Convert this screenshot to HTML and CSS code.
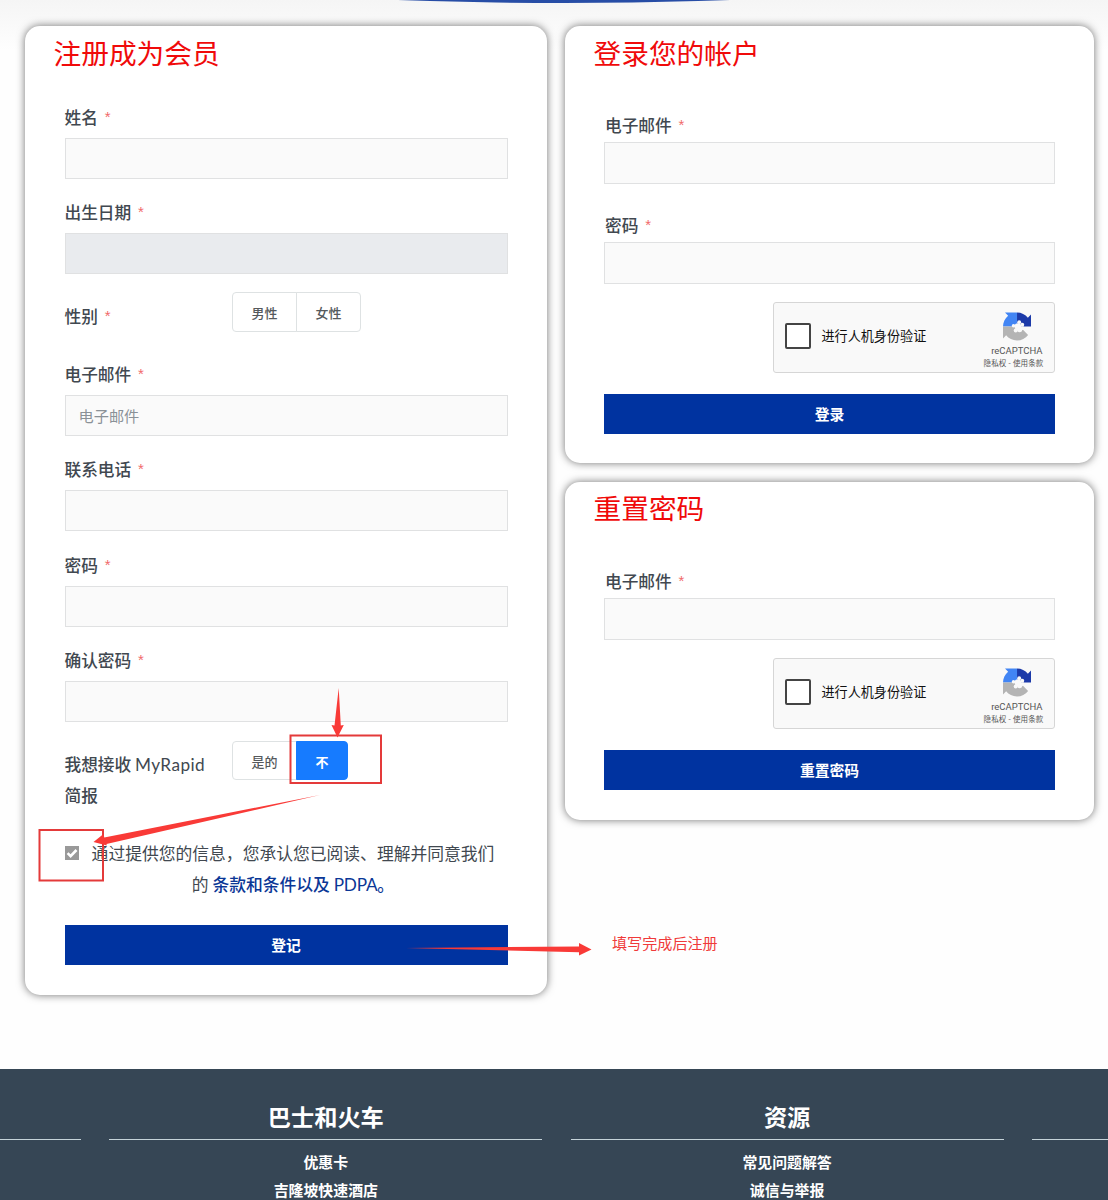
FILE: index.html
```html
<!DOCTYPE html>
<html lang="zh-CN">
<head>
<meta charset="utf-8">
<title>MyRapid</title>
<link rel="stylesheet" href="styles.css">
</head>
<body>
<svg width="0" height="0" class="defs">
  <symbol id="recaptcha" viewBox="0 0 64 64">
    <path fill="#1c3aa9" d="M64 31.955V4.687l-7.160 7.160C50.948 4.674 42.033.093 32.050.093V32z"/>
    <path fill="#4285f4" d="M32 .094H4.594l7.160 7.160C4.580 13.147 0 22.060 0 32.046h32z"/>
    <path fill="#b4b4b4" d="M.001 32.045v27.268l7.160-7.160c5.860 7.173 14.774 11.754 24.760 11.754 10.400 0 19.622-4.960 25.458-12.640L45.600 39.500 32 32z"/>
    <g fill="#f9f9f9"><circle cx="24" cy="30" r="4"/><circle cx="37" cy="22" r="4.500"/><circle cx="44" cy="28" r="4.500"/><circle cx="34" cy="32" r="7.500"/><circle cx="29" cy="41" r="4.500"/><circle cx="38" cy="39" r="6"/><path d="M38 32h10l-3 8h-8z"/></g>
  </symbol>
</svg>
<div class="banner"><div class="banner-edge"></div></div>
<main class="columns">
  <section class="card register">
    <h2>注册成为会员</h2>
    <form class="form">
      <div class="field"><label>姓名 <i>*</i></label><div class="input"></div></div>
      <div class="field"><label>出生日期 <i>*</i></label><div class="input disabled"></div></div>
      <div class="choice"><label>性别 <i>*</i></label><div class="toggle"><span>男性</span><span>女性</span></div></div>
      <div class="field"><label>电子邮件 <i>*</i></label><div class="input">电子邮件</div></div>
      <div class="field"><label>联系电话 <i>*</i></label><div class="input"></div></div>
      <div class="field"><label>密码 <i>*</i></label><div class="input"></div></div>
      <div class="field"><label>确认密码 <i>*</i></label><div class="input"></div></div>
      <div class="choice news"><label>我想接收 <span class="latin">MyRapid</span> 简报</label><div class="toggle"><span>是的</span><span class="active">不</span></div></div>
      <div class="consent">
        <svg class="check" viewBox="0 0 14 14"><rect width="14" height="14" fill="#999"/><path d="M2.600 7.200l3 3L11.500 4" fill="none" stroke="#fff" stroke-width="2.600"/></svg>
        <p>通过提供您的信息，您承认您已阅读、理解并同意我们<br>的 <a>条款和条件以及 <span class="latin pdpa">PDPA</span>。</a></p>
      </div>
      <div class="button">登记</div>
    </form>
  </section>
  <div class="side">
    <section class="card login">
      <h2>登录您的帐户</h2>
      <form class="form">
        <div class="field"><label>电子邮件 <i>*</i></label><div class="input"></div></div>
        <div class="field"><label>密码 <i>*</i></label><div class="input"></div></div>
        <div class="captcha"><span class="box"></span><span class="prompt">进行人机身份验证</span><div class="brand"><svg><use href="#recaptcha"/></svg><b>reCAPTCHA</b><small>隐私权 - 使用条款</small></div></div>
        <div class="button">登录</div>
      </form>
    </section>
    <section class="card reset">
      <h2>重置密码</h2>
      <form class="form">
        <div class="field"><label>电子邮件 <i>*</i></label><div class="input"></div></div>
        <div class="captcha"><span class="box"></span><span class="prompt">进行人机身份验证</span><div class="brand"><svg><use href="#recaptcha"/></svg><b>reCAPTCHA</b><small>隐私权 - 使用条款</small></div></div>
        <div class="button">重置密码</div>
      </form>
    </section>
  </div>
</main>
<footer class="footer">
  <div class="footer-col first"><h3></h3></div>
  <div class="footer-col"><h3>巴士和火车</h3><a>优惠卡</a><a>吉隆坡快速酒店</a></div>
  <div class="footer-col"><h3>资源</h3><a>常见问题解答</a><a>诚信与举报</a></div>
  <div class="footer-col last"><h3></h3></div>
</footer>
<svg class="marks" width="1108" height="1200" viewBox="0 0 1108 1200">
  <g fill="none" stroke="#e43a3a" stroke-width="2">
    <rect x="290.500" y="735.500" width="90.500" height="47.500"/>
    <rect x="39.500" y="830" width="63.500" height="50.500"/>
  </g>
  <g fill="#f93a37">
    <path d="M338.700 688L340.800 725.500l3-.5-6.300 12.500-6-12.500 3 .5z"/>
    <path d="M320 795L106.500 844l.3 1.500L93.500 842l10-8 .8 3.500z"/>
    <path d="M406 948l173-1.500v-3.500l12.500 6.500-12.500 6v-3.300z"/>
  </g>
</svg>
<div class="note">填写完成后注册</div>
</body>
</html>
```
FILE: styles.css
```css
* { box-sizing: border-box; }
body {
  position: relative;
  margin: 0;
  height: 1200px;
  overflow: hidden;
  font-family: "Noto Sans CJK SC", sans-serif;
  font-size: 16.7px;
  color: #414850;
  background: linear-gradient(#f5f5f5, #fefefe 50px);
}
h2, h3, p { margin: 0; font-weight: 400; }
.defs { position: absolute; }
.banner {
  position: absolute;
  left: 0;
  top: 0;
  width: 100%;
  height: 4px;
  overflow: hidden;
}
.banner-edge {
  width: 700px;
  height: 50px;
  margin: -47.500px 0 0 214px;
  border-radius: 50%;
  background: #274da6;
}
.columns {
  display: flex;
  align-items: flex-start;
  gap: 18px;
  height: 1069px;
  padding: 26px 14px 0 24.500px;
}
.card {
  border-radius: 15px;
  background: #fff;
  box-shadow: 0 0 8px rgba(0, 0, 0, .55);
}
.card h2 {
  height: 74px;
  padding: 5.500px 29px 0;
  font-size: 27.700px;
  line-height: 40px;
  color: #f00a0a;
}
.side .card h2 { padding: 5.500px 28.500px 0; }
.side .reset h2 { padding-top: 5px; }
.register { width: 522.500px; height: 968.500px; }
.side { display: flex; flex: 1; flex-direction: column; gap: 19px; }
.login { height: 437px; }
.reset { height: 337.500px; }
.form { padding: 1.500px 39.500px 0 40px; }
.side .form { padding: 10px 39px 0; }
label { display: block; line-height: 31px; font-weight: 500; }
label i {
  position: relative;
  top: -2px;
  margin-left: 3px;
  font: 15px/1 "Liberation Sans", sans-serif;
  color: #f16a6a;
}
.field { height: 95.400px; }
.input {
  height: 41px;
  margin-top: 5px;
  padding-left: 13px;
  border: 1px solid #e0e1e2;
  background: #fafafa;
  font-size: 15.200px;
  line-height: 38px;
  color: #8a9197;
}
.input.disabled { background: #e9ebee; }
.side .field { height: 100.200px; }
.side .input { height: 41.500px; margin-top: 1px; }
.side label { padding-left: 1px; }
.side .field:has(+ .captcha) { height: 92px; }
.choice { display: flex; height: 66.700px; }
.choice label { flex: 0 0 167.500px; padding: 8.500px 20px 0 0; }
.latin { font-family: Lato, sans-serif; font-weight: 400; font-size: 17.200px; letter-spacing: .45px; }
.pdpa { letter-spacing: -.2px; }
.news { height: 97px; }
.toggle {
  display: flex;
  height: 39.500px;
  font-size: 13px;
  font-weight: 500;
  color: #55595c;
}
.toggle span { padding: 0 18.500px; border: 1px solid #dee2e3; line-height: 39px; }
.toggle span:first-child { border-radius: 4px 0 0 4px; }
.toggle span:last-child { margin-left: -1px; border-radius: 0 4px 4px 0; }
.toggle .active { border-color: #167bff; background: #167bff; color: #fff; font-weight: 700; }
.consent { display: flex; height: 87px; font-size: 16.800px; line-height: 31px; }
.check { width: 14px; height: 14px; margin-top: 8.500px; }
.consent p { flex: none; width: 403px; margin-left: 13px; text-align: center; white-space: nowrap; }
.consent a { color: #0b3796; font-weight: 500; }
.button {
  height: 40px;
  background: #0033a0;
  color: #fff;
  font-size: 14.800px;
  font-weight: 700;
  line-height: 40px;
  text-align: center;
}
.captcha {
  display: flex;
  width: 282px;
  height: 71px;
  margin: 0 .5px 20.500px auto;
  padding-left: 11px;
  border: 1px solid #d6d6d6;
  border-radius: 3px;
  background: #f9f9f9;
}
.box { width: 26px; height: 26px; margin-top: 20px; border: 2px solid #444; border-radius: 2px; background: #fff; }
.prompt { margin-left: 11px; font-size: 13.100px; line-height: 65px; color: #111; }
.brand { display: flex; flex: 1; flex-direction: column; align-items: flex-end; padding: 9px 10px 0 0; color: #555; }
.brand svg { width: 28px; height: 29px; margin-right: 12.500px; }
.brand b { margin: 3.500px 1px 0 0; font: 400 9.500px/12px Roboto, sans-serif; }
.brand small { font-size: 7.500px; line-height: 12px; letter-spacing: .15px; white-space: nowrap; }
.footer {
  display: flex;
  gap: 28.300px;
  height: 131px;
  background: #364655;
  color: #fff;
  text-align: center;
}
.footer-col { flex: 0 0 433px; font-size: 14.900px; font-weight: 700; }
.footer-col.first { flex-basis: 81px; }
.footer-col.last { flex: 1 1 0; }
.footer-col h3 {
  height: 71px;
  margin-bottom: 7.500px;
  padding-top: 31px;
  border-bottom: 1px solid #c5d3d9;
  font-size: 23.200px;
  font-weight: 700;
  line-height: 32px;
}
.footer-col a { display: block; line-height: 28px; }
.marks { position: absolute; left: 0; top: 0; }
.note { position: absolute; left: 612px; top: 931px; font-size: 15.100px; line-height: 23px; color: #f03a3a; }
```
